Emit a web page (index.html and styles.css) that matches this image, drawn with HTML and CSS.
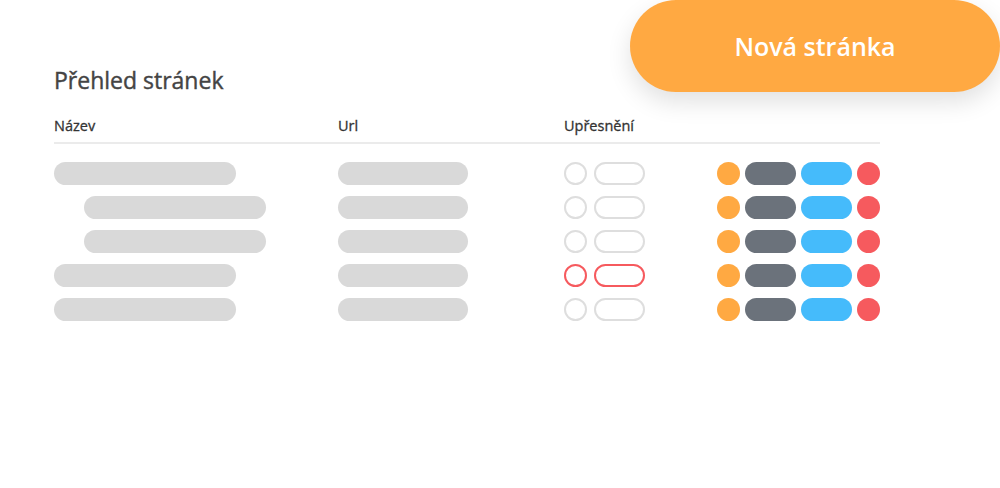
FILE: index.html
```html
<!DOCTYPE html>
<html lang="cs">
<head>
    <meta charset="UTF-8">
    <meta name="viewport" content="width=device-width, initial-scale=1.0">
    <title>Přehled stránek</title>
    <link rel="stylesheet" href="styles.css">
</head>
<body>
    <div class="page">
        <div class="top">
            <h2>Přehled stránek</h2>
            <button type="button" class="new-page">Nová stránka</button>
        </div>

        <div class="table">
            <div class="row head">
                <div>Název</div>
                <div>Url</div>
                <div>Upřesnění</div>
                <div></div>
            </div>

            <div class="row">
                <div><span class="bar name"></span></div>
                <div><span class="bar url"></span></div>
                <div class="detail"><span class="ring"></span><span class="pill"></span></div>
                <div class="actions"><span class="dot orange"></span><span class="btn gray"></span><span class="btn blue"></span><span class="dot red"></span></div>
            </div>
            <div class="row">
                <div><span class="bar name sub"></span></div>
                <div><span class="bar url"></span></div>
                <div class="detail"><span class="ring"></span><span class="pill"></span></div>
                <div class="actions"><span class="dot orange"></span><span class="btn gray"></span><span class="btn blue"></span><span class="dot red"></span></div>
            </div>
            <div class="row">
                <div><span class="bar name sub"></span></div>
                <div><span class="bar url"></span></div>
                <div class="detail"><span class="ring"></span><span class="pill"></span></div>
                <div class="actions"><span class="dot orange"></span><span class="btn gray"></span><span class="btn blue"></span><span class="dot red"></span></div>
            </div>
            <div class="row">
                <div><span class="bar name"></span></div>
                <div><span class="bar url"></span></div>
                <div class="detail error"><span class="ring"></span><span class="pill"></span></div>
                <div class="actions"><span class="dot orange"></span><span class="btn gray"></span><span class="btn blue"></span><span class="dot red"></span></div>
            </div>
            <div class="row">
                <div><span class="bar name"></span></div>
                <div><span class="bar url"></span></div>
                <div class="detail"><span class="ring"></span><span class="pill"></span></div>
                <div class="actions"><span class="dot orange"></span><span class="btn gray"></span><span class="btn blue"></span><span class="dot red"></span></div>
            </div>
        </div>
    </div>
</body>
</html>
```

FILE: styles.css
```css
body {
    font-family: "Open Sans", Arial, sans-serif;
    margin: 0;
    padding: 0;
    background: #fff;
    color: #333;
}
.page {
    padding-left: 54px;
}
.top {
    display: flex;
    justify-content: space-between;
    align-items: flex-end;
    height: 92px;
}
.top h2 {
    margin: 0;
    font-size: 23px;
    font-weight: 400;
    -webkit-text-stroke: 0.4px #444;
    color: #444;
    line-height: 1;
    padding-bottom: 0;
}
.new-page {
    width: 370px;
    height: 92px;
    border: none;
    border-radius: 46px;
    background-color: #ffa942;
    color: #fff;
    font-family: "Open Sans", Arial, sans-serif;
    font-size: 25px;
    font-weight: 600;
    box-shadow: 0 10px 24px rgba(0, 0, 0, 0.12);
    cursor: pointer;
}
.table {
    width: 826px;
}
.row {
    display: grid;
    grid-template-columns: 284px 226px 1fr auto;
    align-items: center;
    height: 23px;
    margin-bottom: 11px;
}
.row.head {
    height: auto;
    font-size: 14.5px;
    font-weight: 400;
    -webkit-text-stroke: 0.3px #333;
    color: #333;
    padding-top: 24px;
    padding-bottom: 7px;
    border-bottom: 2px solid #ebebeb;
    margin-bottom: 18px;
}
.bar {
    display: block;
    height: 23px;
    border-radius: 12px;
    background: #d9d9d9;
}
.bar.name {
    width: 182px;
}
.bar.sub {
    margin-left: 30px;
}
.bar.url {
    width: 130px;
}
.detail, .actions {
    display: flex;
    align-items: center;
}
.detail {
    gap: 7px;
}
.ring, .pill {
    box-sizing: border-box;
    height: 23px;
    border: 2px solid #dedede;
    border-radius: 12px;
}
.ring {
    width: 23px;
}
.pill {
    width: 51px;
}
.detail.error .ring, .detail.error .pill {
    border-color: #f65a5e;
}
.actions {
    gap: 5px;
}
.dot {
    width: 23px;
    height: 23px;
    border-radius: 50%;
}
.btn {
    width: 51px;
    height: 23px;
    border-radius: 12px;
}
.orange { background: #ffa942; }
.gray { background: #6b727b; }
.blue { background: #45bbfb; }
.red { background: #f65a5e; }
```
